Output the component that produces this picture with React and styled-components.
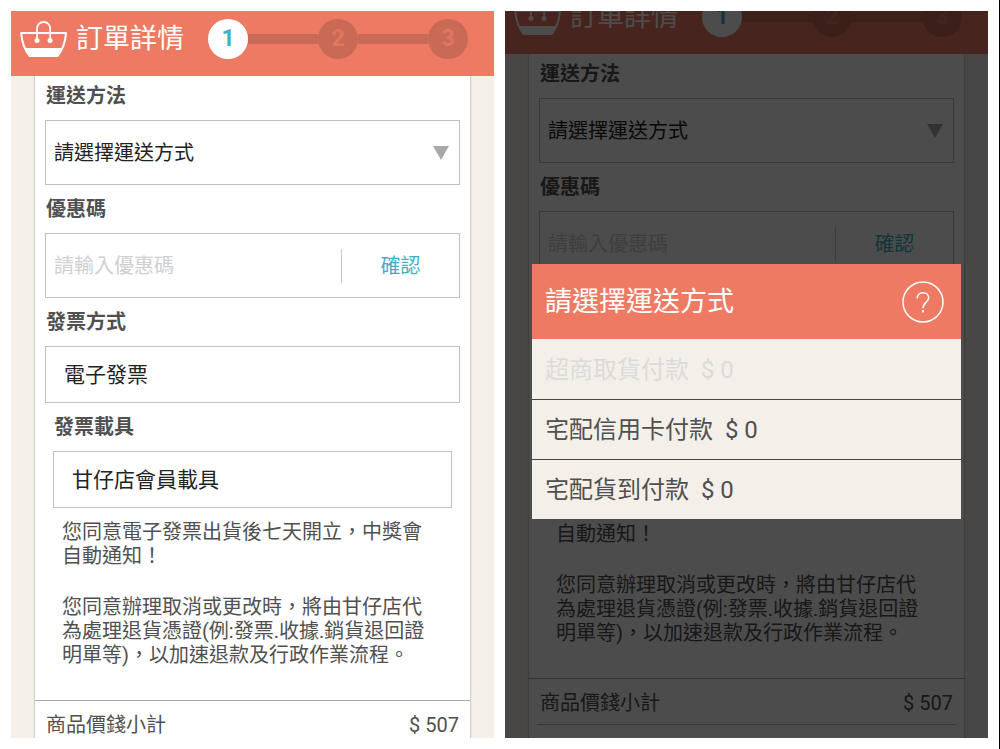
import React, { useId, useState } from 'react';
import styled, { createGlobalStyle } from 'styled-components';

const GlobalStyle = createGlobalStyle`
* {
    box-sizing: border-box;
}
body {
    margin: 0;
    background: #fff;
    color: #505050;
    font-family: Roboto, "Noto Sans CJK TC", sans-serif;
    font-size: 20px;
    line-height: 24px;
}
button, input, select {
    font: inherit;
    color: inherit;
    margin: 0;
    padding: 0;
    border: none;
    border-radius: 0;
    background: none;
    outline: none;
}
button {
    cursor: pointer;
}
`

const Page = styled.main`
    display: grid;
    grid-template-columns: 1fr 1fr;
    gap: 11px;
    height: 100vh;
    padding: 11px;
    border-right: 1px solid #000;
`

const Screen = styled.section`
    position: relative;
    min-width: 0;
    overflow: hidden;
    background: #f4efe9;
`

const Scroller = styled.div`
    display: flex;
    flex-direction: column;
    min-height: 100%;
    margin-top: ${props => -props.$scrolled}px;
`

const Header = styled.header`
    position: relative;
    display: flex;
    align-items: center;
    height: 65px;
    padding: 0 26px 10px 9px;
    background: #ee7a63;
    color: #fff;
`

const Title = styled.h1`
    flex: none;
    margin: 0 24px 0 8px;
    font-size: 27px;
    line-height: 40px;
    font-weight: 400;
`

const Steps = styled.ol`
    display: flex;
    align-items: center;
    flex: 1;
    margin: 0;
    padding: 0;
    list-style: none;
`

const Step = styled.li`
    display: flex;
    align-items: center;
    flex: ${props => props.$first ? 'none' : 1};

    &::before {
        content: "";
        display: ${props => props.$first ? 'none' : 'block'};
        flex: 1;
        height: 10px;
        background: #c86a55;
    }
`

const StepNumber = styled.span`
    width: 40px;
    border-radius: 50%;
    background: ${props => props.$active ? '#fff' : '#c86a55'};
    color: ${props => props.$active ? '#46b0c3' : '#e37560'};
    font-size: 23px;
    line-height: 40px;
    font-weight: 700;
    text-align: center;
`

const Card = styled.div`
    flex: 1;
    margin: 0 24px;
    padding-bottom: 48px;
    background: #fff;
    box-shadow: 0 0 2px rgba(0, 0, 0, 0.4);
`

const Form = styled.form`
    padding: 8px 10px 33px;
`

const Label = styled.label`
    display: block;
    margin-bottom: 12px;
    padding-left: 1px;
    font-weight: 700;
`

const Field = styled.div`
    display: flex;
    align-items: center;
    height: ${props => props.$small ? 57 : 65}px;
    margin-bottom: 12px;
    padding-right: ${props => props.$flush ? 0 : 10}px;
    border: 1px solid #c0c0c0;
    color: #222;
`

const Select = styled.select`
    flex: 1;
    min-width: 0;
    height: 100%;
    padding-left: ${props => props.$large ? 18 : 8}px;
    appearance: none;
    font-size: ${props => props.$large ? 21 : 20}px;
`

const CodeInput = styled.input`
    flex: 1;
    min-width: 0;
    height: 100%;
    padding-left: 8px;

    &::placeholder {
        color: #cfcfcf;
        opacity: 1;
    }
`

const ConfirmButton = styled.button`
    width: 118px;
    height: 34px;
    border-left: 1px solid #c8c8c8;
    color: #3fafc3;
`

const Carrier = styled.div`
    padding: 0 8px;
`

const Notice = styled.p`
    margin: 0 18px 27px 9px;

    &:last-child {
        margin-bottom: 0;
    }
`

const Totals = styled.dl`
    margin: 0;
    padding: 0 8px;
    border-top: 1px solid #a8a8a8;
`

const TotalRow = styled.div`
    display: flex;
    justify-content: space-between;
    padding: 12px 3px 9px;
    border-bottom: 1px solid #b4b4b4;

    dd {
        margin: 0;
    }
`

const Overlay = styled.div`
    position: absolute;
    inset: 0;
    display: flex;
    flex-direction: column;
    justify-content: center;
    padding: 34px 27px 0;
    background: rgba(0, 0, 0, 0.7);
`

const Dialog = styled.div`
    background: #f4efe9;
`

const DialogHeader = styled.div`
    display: flex;
    align-items: center;
    justify-content: space-between;
    height: 75px;
    padding: 0 17px 0 13px;
    background: #ee7a63;
    color: #fff;
`

const DialogTitle = styled.h2`
    margin: 0;
    font-size: 27px;
    line-height: 40px;
    font-weight: 400;
`

const HelpButton = styled.button`
    display: flex;
    color: #fff;
`

const Option = styled.button`
    display: block;
    width: 100%;
    height: 60px;
    padding: 0 13px;
    border-top: 1px solid #444;
    font-size: 24px;
    text-align: left;
    white-space: pre;

    &:disabled {
        border-top-color: transparent;
        color: #dcdbdb;
        cursor: default;
    }
`

const shippingOptions = [
    { name: '超商取貨付款', price: 0, disabled: true },
    { name: '宅配信用卡付款', price: 0 },
    { name: '宅配貨到付款', price: 0 },
]

function BasketIcon() {
    return (
        <svg width="48" height="38" viewBox="0 0 48 38" fill="none" aria-hidden="true">
            <path d="M1.2 13H46C45.4 22.500 42.500 30 37.500 36H9.700C4.700 30 1.800 22.500 1.200 13Z" stroke="#fff" strokeWidth="2" strokeLinejoin="round" />
            <path d="M5.500 28H41.800C40.500 31 39 33.800 37.200 36.200H10C8.200 33.800 6.700 31 5.500 28Z" fill="#fff" />
            <path d="M17 20V9C17 4.500 19.800 2 23.600 2C27.400 2 30.200 4.500 30.200 9V20" stroke="#fff" strokeWidth="1.800" />
            <circle cx="17" cy="20.500" r="2.500" fill="#fff" />
            <circle cx="30" cy="20.500" r="2.500" fill="#fff" />
        </svg>
    )
}

function Caret() {
    return (
        <svg width="16" height="14" viewBox="0 0 16 14" aria-hidden="true">
            <path d="M0 0H16L8 14Z" fill="#a8a8a8" />
        </svg>
    )
}

function HelpIcon() {
    return (
        <svg width="42" height="42" viewBox="0 0 42 42" fill="none" stroke="#fff" strokeWidth="1.500" aria-hidden="true">
            <circle cx="21" cy="21" r="20" />
            <path d="M15.300 17.500C15.300 13.800 17.700 11.700 21 11.700C24.400 11.700 26.700 13.800 26.700 16.800C26.700 21.300 21 21 21 27.200" />
            <path d="M21 29V31.500" strokeWidth="2" />
        </svg>
    )
}

function OrderScreen({ scrolled = 0, children }) {
    const [code, setCode] = useState('')
    const id = useId()

    return (
        <Screen>
            <Scroller $scrolled={scrolled}>
                <Header>
                    <BasketIcon />
                    <Title>訂單詳情</Title>
                    <Steps>
                        {[1, 2, 3].map(step => (
                            <Step key={step} $first={step === 1}>
                                <StepNumber $active={step === 1}>{step}</StepNumber>
                            </Step>
                        ))}
                    </Steps>
                </Header>
                <Card>
                    <Form onSubmit={e => e.preventDefault()}>
                        <Label htmlFor={`${id}-shipping`}>運送方法</Label>
                        <Field>
                            <Select id={`${id}-shipping`}>
                                <option>請選擇運送方式</option>
                            </Select>
                            <Caret />
                        </Field>

                        <Label htmlFor={`${id}-code`}>優惠碼</Label>
                        <Field $flush>
                            <CodeInput
                                id={`${id}-code`}
                                placeholder="請輸入優惠碼"
                                value={code}
                                onChange={e => setCode(e.target.value)}
                            />
                            <ConfirmButton type="submit">確認</ConfirmButton>
                        </Field>

                        <Label htmlFor={`${id}-invoice`}>發票方式</Label>
                        <Field $small>
                            <Select id={`${id}-invoice`} $large>
                                <option>電子發票</option>
                            </Select>
                        </Field>

                        <Carrier>
                            <Label htmlFor={`${id}-carrier`}>發票載具</Label>
                            <Field $small>
                                <Select id={`${id}-carrier`} $large>
                                    <option>甘仔店會員載具</option>
                                </Select>
                            </Field>
                            <Notice>您同意電子發票出貨後七天開立，中獎會自動通知！</Notice>
                            <Notice>您同意辦理取消或更改時，將由甘仔店代為處理退貨憑證(例:發票.收據.銷貨退回證明單等)，以加速退款及行政作業流程。</Notice>
                        </Carrier>
                    </Form>
                    <Totals>
                        <TotalRow>
                            <dt>商品價錢小計</dt>
                            <dd>$ 507</dd>
                        </TotalRow>
                    </Totals>
                </Card>
            </Scroller>
            {children}
        </Screen>
    )
}

function ShippingDialog() {
    return (
        <Overlay>
            <Dialog role="dialog" aria-label="請選擇運送方式">
                <DialogHeader>
                    <DialogTitle>請選擇運送方式</DialogTitle>
                    <HelpButton type="button" aria-label="說明">
                        <HelpIcon />
                    </HelpButton>
                </DialogHeader>
                {shippingOptions.map(option => (
                    <Option key={option.name} type="button" disabled={option.disabled}>
                        {`${option.name}  $ ${option.price}`}
                    </Option>
                ))}
            </Dialog>
        </Overlay>
    )
}

function App() {
    return (
        <>
            <GlobalStyle />
            <Page lang="zh-Hant">
                <OrderScreen />
                {/* same form, scrolled a little, with the shipping picker open */}
                <OrderScreen scrolled={22}>
                    <ShippingDialog />
                </OrderScreen>
            </Page>
        </>
    );
}

export default App;
